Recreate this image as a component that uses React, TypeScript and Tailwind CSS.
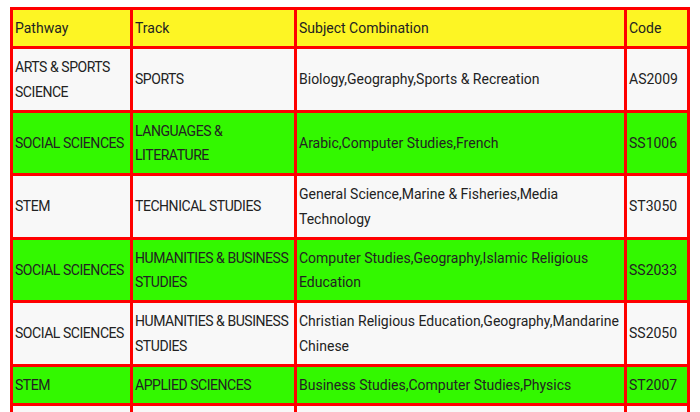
const rows = [
  { pathway: ["ARTS & SPORTS", "SCIENCE"], track: ["SPORTS"], subjects: "Biology,Geography,Sports & Recreation", code: "AS2009" },
  { pathway: ["SOCIAL SCIENCES"], track: ["LANGUAGES &", "LITERATURE"], subjects: "Arabic,Computer Studies,French", code: "SS1006" },
  { pathway: ["STEM"], track: ["TECHNICAL STUDIES"], subjects: "General Science,Marine & Fisheries,Media Technology", code: "ST3050" },
  { pathway: ["SOCIAL SCIENCES"], track: ["HUMANITIES & BUSINESS", "STUDIES"], subjects: "Computer Studies,Geography,Islamic Religious Education", code: "SS2033" },
  { pathway: ["SOCIAL SCIENCES"], track: ["HUMANITIES & BUSINESS", "STUDIES"], subjects: "Christian Religious Education,Geography,Mandarine Chinese", code: "SS2050" },
  { pathway: ["STEM"], track: ["APPLIED SCIENCES"], subjects: "Business Studies,Computer Studies,Physics", code: "ST2007" },
];

const cell = "border-[3px] border-[#ff0000] px-[2px] py-[6px] align-middle";
const caps = `${cell} whitespace-nowrap tracking-[-0.45px]`;

function Lines({ lines }: { lines: string[] }) {
  return (
    <>
      {lines.map((l, i) => (
        <span key={i} className="block">
          {l}
        </span>
      ))}
    </>
  );
}

export default function App() {
  return (
    <div className="min-h-screen bg-white pt-[7px] pl-[10px]" style={{ fontFamily: 'Roboto, "Noto Sans", sans-serif' }}>
      <table className="w-[680px] table-fixed border-collapse border-[3px] border-[#ff0000] text-left text-[14px] leading-[24.25px] text-[#222]">
        <colgroup>
          <col className="w-[120px]" />
          <col className="w-[164px]" />
          <col className="w-[330px]" />
          <col className="w-[63px]" />
        </colgroup>
        <thead>
          <tr className="bg-[#fdf524]">
            <th className={`${cell} font-normal`}>Pathway</th>
            <th className={`${cell} font-normal`}>Track</th>
            <th className={`${cell} font-normal`}>Subject Combination</th>
            <th className={`${cell} font-normal`}>Code</th>
          </tr>
        </thead>
        <tbody>
          {rows.map((r, i) => (
            <tr key={i} className={i % 2 === 1 ? "bg-[#33f800]" : "bg-[#f8f8f8]"}>
              <td className={caps}>
                <Lines lines={r.pathway} />
              </td>
              <td className={caps}>
                <Lines lines={r.track} />
              </td>
              <td className={cell}>{r.subjects}</td>
              <td className={cell}>{r.code}</td>
            </tr>
          ))}
          <tr className="h-[61px] bg-[#f8f8f8]">
            <td className={cell}></td>
            <td className={cell}></td>
            <td className={cell}></td>
            <td className={cell}></td>
          </tr>
        </tbody>
      </table>
    </div>
  );
}
